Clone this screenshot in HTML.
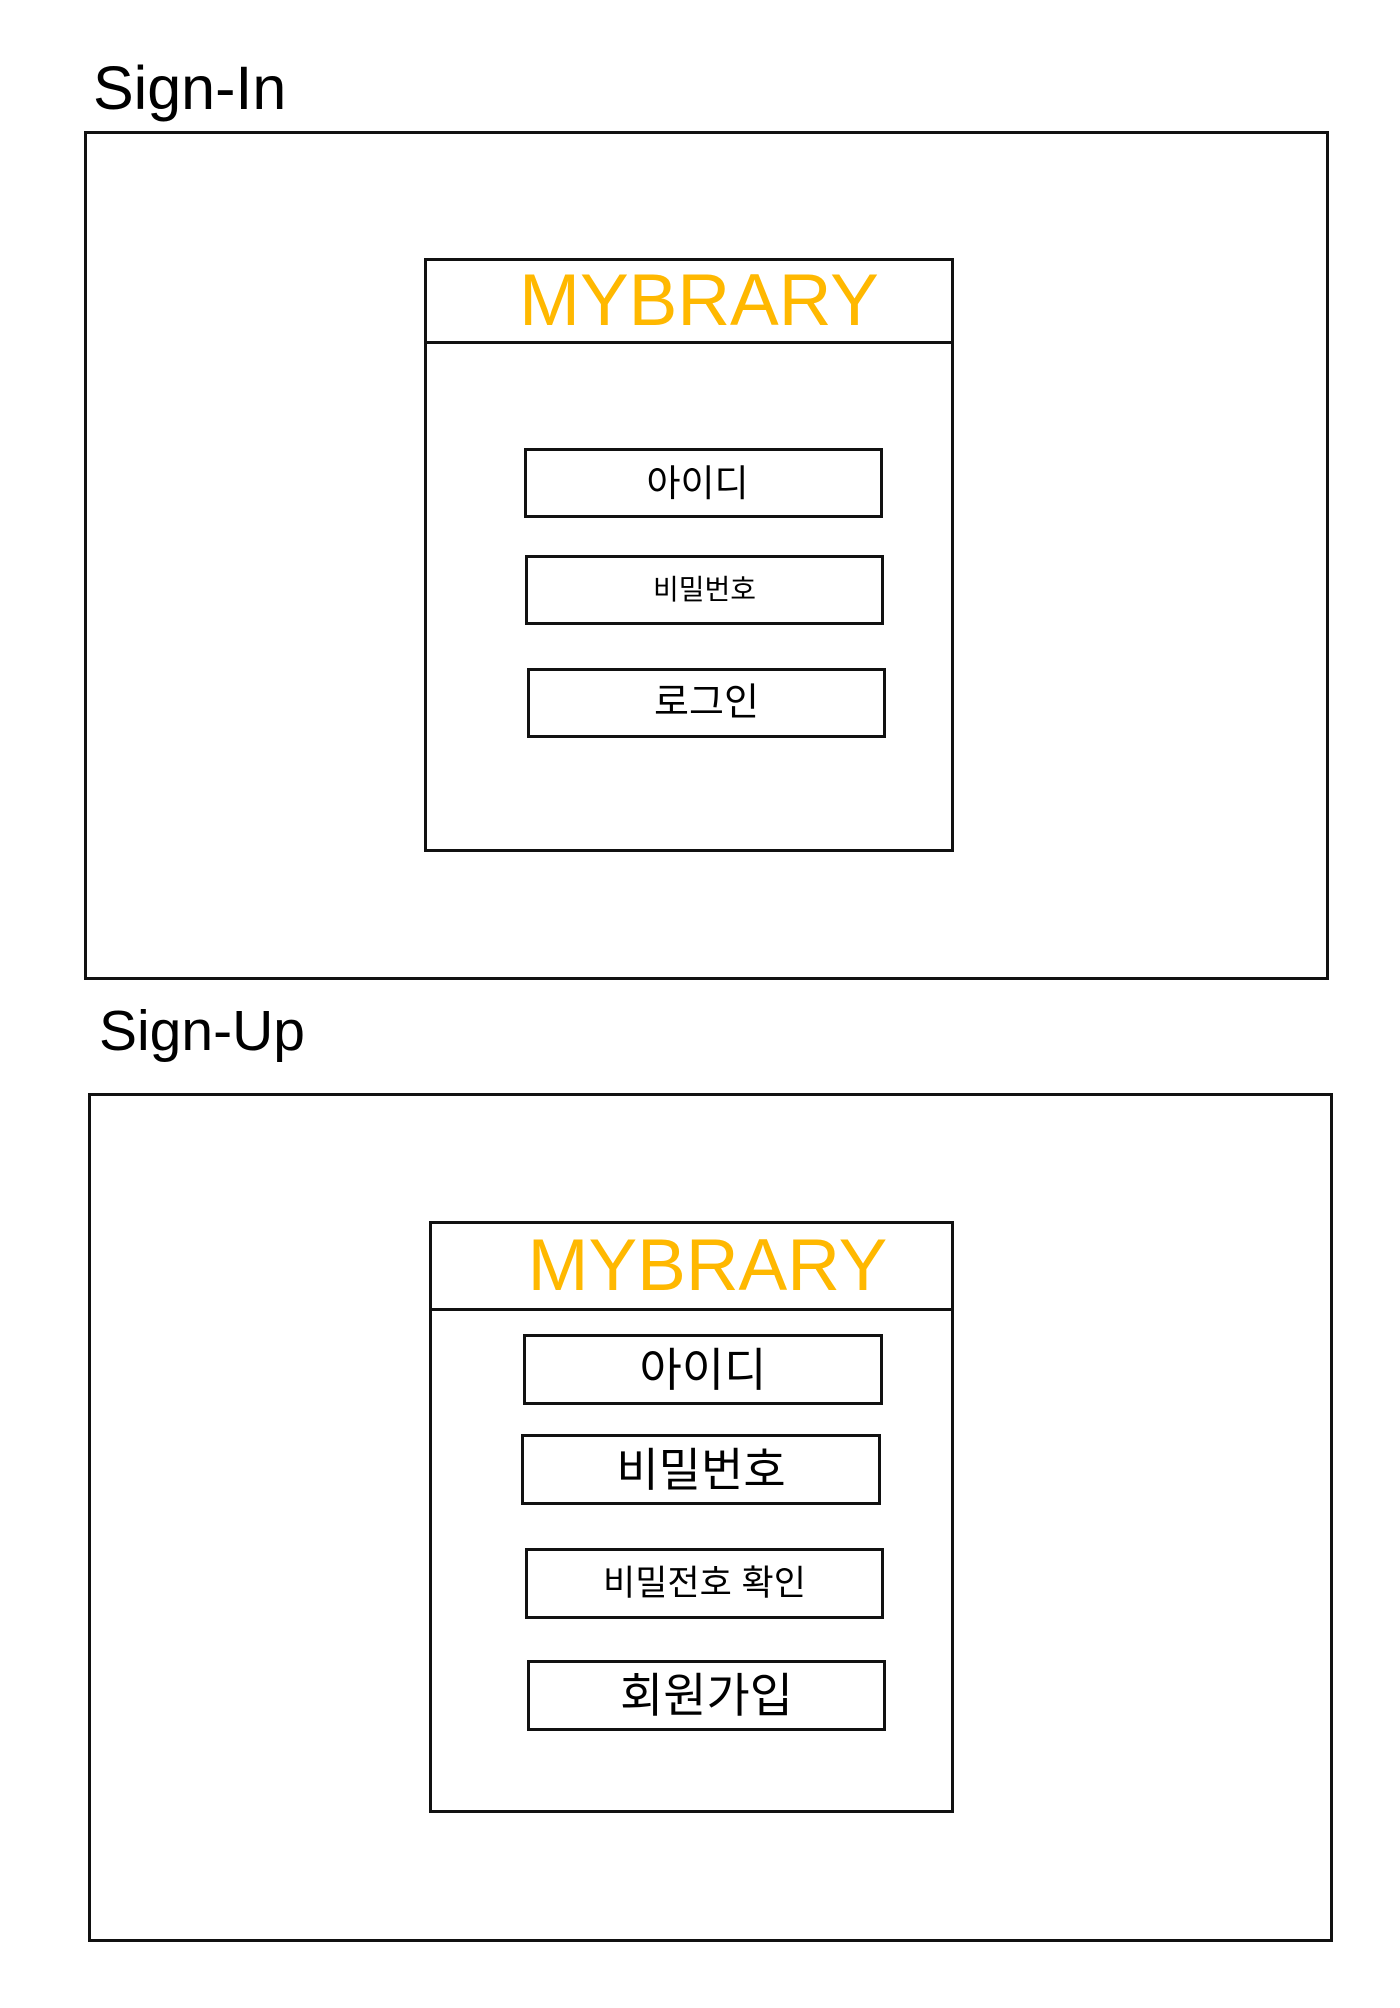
<!DOCTYPE html>
<html><head><meta charset="utf-8"><style>
html,body{margin:0;padding:0;background:#fff;}
body{width:1400px;height:2008px;position:relative;overflow:hidden;font-family:"Liberation Sans","Noto Sans CJK KR","NanumGothic",sans-serif;color:#000;}
.a{position:absolute;box-sizing:border-box;}
.box{border:3px solid #111;}
.t{position:absolute;white-space:nowrap;line-height:1;}
.f{position:absolute;box-sizing:border-box;border:3px solid #111;display:flex;align-items:center;justify-content:center;line-height:1;}
.logo{position:absolute;color:#FFB800;font-size:73px;line-height:1;text-align:center;}
.hl{position:absolute;height:3px;background:#111;}
</style></head><body>
<div class="t" style="left:93px;top:58px;font-size:61px;">Sign-In</div>
<div class="a box" style="left:84px;top:131px;width:1245px;height:849px;"></div>
<div class="a box" style="left:424px;top:258px;width:530px;height:594px;"></div>
<div class="hl" style="left:424px;top:341px;width:530px;"></div>
<div class="logo" style="left:434px;top:264px;width:530px;">MYBRARY</div>
<div class="f" style="left:524px;top:448px;width:359px;height:70px;font-size:37px;"><span style="margin-left:-12px">아이디</span></div>
<div class="f" style="left:525px;top:555px;width:359px;height:70px;font-size:28px;">비밀번호</div>
<div class="f" style="left:527px;top:668px;width:359px;height:70px;font-size:38px;">로그인</div>

<div class="t" style="left:99px;top:1003px;font-size:57px;">Sign-Up</div>
<div class="a box" style="left:88px;top:1093px;width:1245px;height:849px;"></div>
<div class="a box" style="left:429px;top:1221px;width:525px;height:592px;"></div>
<div class="hl" style="left:429px;top:1308px;width:525px;"></div>
<div class="logo" style="left:445px;top:1229px;width:525px;">MYBRARY</div>
<div class="f" style="left:523px;top:1334px;width:360px;height:71px;font-size:46px;">아이디</div>
<div class="f" style="left:521px;top:1434px;width:360px;height:71px;font-size:46px;">비밀번호</div>
<div class="f" style="left:525px;top:1548px;width:359px;height:71px;font-size:35px;">비밀전호 확인</div>
<div class="f" style="left:527px;top:1660px;width:359px;height:71px;font-size:47px;">회원가입</div>
</body></html>
